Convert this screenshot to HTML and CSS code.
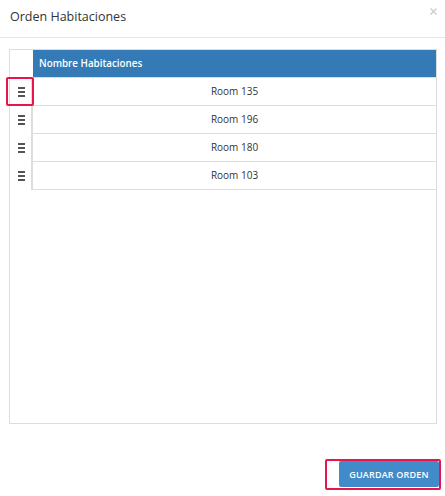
FILE: index.html
```html
<!DOCTYPE html>
<html lang="es">
<head>
<meta charset="utf-8">
<title>Orden Habitaciones</title>
<link rel="stylesheet" href="styles.css">
</head>
<body>
<div class="modal">
  <div class="modal-header">
    <h4 class="modal-title">Orden Habitaciones</h4>
    <button class="close" aria-label="Cerrar">
      <svg width="7" height="7" viewBox="0 0 7 7"><path d="M0.5 0.5L6.5 6.5M6.5 0.5L0.5 6.5" stroke="#c9c9c9" stroke-width="1.2" fill="none"/></svg>
    </button>
  </div>
  <div class="modal-body">
    <div class="table-box">
      <div class="row head">
        <div class="grip-cell empty"></div>
        <div class="name-cell th">Nombre Habitaciones</div>
      </div>
      <div class="row">
        <div class="grip-cell highlighted"><span class="grip"><i></i><i></i><i></i></span><span class="mark"></span></div>
        <div class="name-cell">Room 135</div>
      </div>
      <div class="row">
        <div class="grip-cell"><span class="grip"><i></i><i></i><i></i></span></div>
        <div class="name-cell">Room 196</div>
      </div>
      <div class="row">
        <div class="grip-cell"><span class="grip"><i></i><i></i><i></i></span></div>
        <div class="name-cell">Room 180</div>
      </div>
      <div class="row">
        <div class="grip-cell"><span class="grip"><i></i><i></i><i></i></span></div>
        <div class="name-cell">Room 103</div>
      </div>
    </div>
  </div>
  <div class="modal-footer">
    <div class="mark-box">
      <button class="btn-save">GUARDAR ORDEN</button>
    </div>
  </div>
</div>
</body>
</html>
```

FILE: styles.css
```css
* { box-sizing: border-box; }
html, body {
  margin: 0;
  padding: 0;
  background: #fff;
  font-family: "Open Sans", "Noto Sans", sans-serif;
  color: #333;
}
.modal {
  width: 445px;
  height: 496px;
  display: flex;
  flex-direction: column;
}
.modal-header {
  height: 38px;
  border-bottom: 1px solid #e5e5e5;
  display: flex;
  justify-content: space-between;
  align-items: flex-start;
  padding: 0 8px 0 10px;
}
.modal-title {
  margin: 0;
  padding-top: 7px;
  font-size: 12.5px;
  line-height: 20px;
  font-weight: 400;
  color: #333;
}
.close {
  margin-top: 8px;
  padding: 0;
  border: 0;
  background: none;
  width: 7px;
  height: 7px;
  display: block;
}
.close svg { display: block; }
.modal-body {
  padding: 11px 8px 0 9px;
}
.table-box {
  height: 375px;
  border: 1px solid #ddd;
}
.row {
  display: flex;
  height: 28px;
}
.grip-cell {
  width: 23px;
  flex: none;
  border-right: 2px solid #ddd;
  display: flex;
  align-items: center;
  justify-content: center;
  position: relative;
  padding-left: 2px;
}
.grip-cell.empty { border-right: 0; }
.name-cell {
  flex: 1;
  border-bottom: 1px solid #ddd;
  font-size: 10px;
  line-height: 27px;
  text-align: center;
  color: #333;
}
.name-cell.th {
  background: #337ab7;
  color: #fff;
  font-weight: 600;
  font-size: 9.8px;
  text-align: left;
  padding-left: 6px;
}
.grip {
  display: flex;
  flex-direction: column;
  gap: 2px;
}
.grip i {
  display: block;
  width: 7px;
  height: 2px;
  background: #555;
}
.mark {
  position: absolute;
  left: -4px;
  top: -1px;
  width: 28px;
  height: 29px;
  border: 2px solid #e8144b;
  border-radius: 2px;
}
.modal-footer {
  flex: 1;
  display: flex;
  justify-content: flex-end;
  align-items: flex-start;
  padding: 35px 4px 0 0;
}
.mark-box {
  border: 2px solid #e8144b;
  border-radius: 2px;
  padding: 0 0 1px 12px;
  display: flex;
}
.btn-save {
  width: 100px;
  height: 26px;
  border: 0;
  border-radius: 2px;
  background: #428bca;
  color: #fff;
  font-family: "Open Sans", "Noto Sans", sans-serif;
  font-size: 9px;
  font-weight: 600;
  letter-spacing: 0.2px;
  padding: 0;
}
```
